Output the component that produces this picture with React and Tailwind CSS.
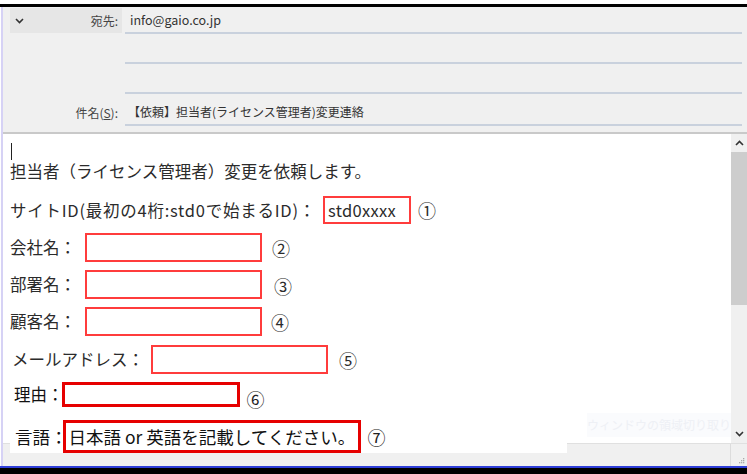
import React from "react";

const jp = { fontFamily: '"Noto Sans CJK JP", "Noto Sans", sans-serif' };

function Chevron({ up = false, className = "" }) {
  return (
    <svg width="9" height="6" viewBox="0 0 9 6" className={className}>
      <path
        d={up ? "M1 5 L4.5 1.5 L8 5" : "M1 1 L4.5 4.5 L8 1"}
        fill="none"
        stroke="#333"
        strokeWidth="1.6"
      />
    </svg>
  );
}

function Box({ w, h, thick = false, children, className = "" }) {
  return (
    <div
      className={`flex items-center shrink-0 ${
        thick ? "border-[3px] border-[#e60000]" : "border-2 border-[#ff3c3c]"
      } ${w} ${h} ${className}`}
    >
      {children}
    </div>
  );
}

export default function App() {
  return (
    <div
      className="w-[747px] h-[474px] bg-white flex flex-col overflow-hidden text-[#333]"
      style={jp}
    >
      <div className="h-[4px] bg-white shrink-0" />
      <div className="h-[3px] bg-black shrink-0" />
      <div className="flex-1 flex flex-col ml-[1px] border-l-2 border-[#d6d2f5] min-h-0">
        {/* header */}
        <div className="h-[125px] bg-[#f0f0f0] flex flex-col shrink-0">
          <div className="h-[27px] flex items-start pt-[1px]">
            <div className="ml-[7px] w-[112px] h-[25px] bg-[#e6e6e6] flex items-center justify-between pl-[5px] pr-[4px]">
              <Chevron />
              <span className="text-[12px] text-[#444]">宛先:</span>
            </div>
            <div className="ml-[3px] mr-[5px] flex-1 h-[26px] border-b-2 border-[#c9d1dd] flex items-center pl-[5px] text-[12.5px] text-[#333]">
              info@gaio.co.jp
            </div>
          </div>
          <div className="h-[30px] flex">
            <div className="w-[122px]" />
            <div className="mr-[5px] flex-1 border-b-2 border-[#c9d1dd]" />
          </div>
          <div className="h-[30px] flex">
            <div className="w-[122px]" />
            <div className="mr-[5px] flex-1 border-b-2 border-[#c9d1dd]" />
          </div>
          <div className="h-[32px] flex">
            <div className="w-[119px] flex items-center justify-end pr-[4px] pt-[6px] text-[12px] text-[#444]">
              件名(<span className="underline">S</span>):
            </div>
            <div className="ml-[3px] mr-[5px] flex-1 border-b-2 border-[#c9d1dd] flex items-center pl-[3px] pt-[6px] text-[12px] text-[#333]">
              【依頼】担当者(ライセンス管理者)変更連絡
            </div>
          </div>
        </div>
        <div className="h-[2px] bg-[#c9c9c9] shrink-0" />

        {/* body */}
        <div className="h-[309px] flex shrink-0 relative">
          <div className="flex-1 relative pl-[7px]">
            <div className="absolute right-0 top-[279px] w-[144px] h-[24px] bg-[#fafbfd] overflow-hidden flex items-center text-[12px] text-[#eef0f5] whitespace-nowrap">
              ウィンドウの領域切り取り
            </div>
            <div className="relative z-10 w-[557px] bg-white flex flex-col text-[16.5px] text-[#2b2b2b] leading-none">
              <div className="h-[26px] pt-[9px] pl-[1px]">
                <div className="w-[1px] h-[17px] bg-[#222]" />
              </div>
              <div className="h-[22px] flex items-center whitespace-nowrap">
                担当者（ライセンス管理者）変更を依頼します。
              </div>
              <div className="h-[28px] mt-[14px] flex items-center whitespace-nowrap">
                <span className="tracking-[0.75px]">サイトID(最初の4桁:std0で始まるID)：</span>
                <Box w="w-[88px]" h="h-[28px]" className="ml-[7px] pl-[3px] tracking-[0.3px]">
                  std0xxxx
                </Box>
                <span className="ml-[7px] text-[18px]">①</span>
              </div>
              <div className="h-[29px] mt-[9px] flex items-center">
                <span>会社名：</span>
                <Box w="w-[177px]" h="h-[29px]" className="ml-[9px]" />
                <span className="ml-[10px] text-[18px]">②</span>
              </div>
              <div className="h-[29px] mt-[8px] flex items-center">
                <span>部署名：</span>
                <Box w="w-[177px]" h="h-[29px]" className="ml-[9px]" />
                <span className="ml-[12px] mt-[2px] text-[18px]">③</span>
              </div>
              <div className="h-[29px] mt-[8px] flex items-center">
                <span>顧客名：</span>
                <Box w="w-[177px]" h="h-[29px]" className="ml-[9px]" />
                <span className="ml-[9px] text-[18px]">④</span>
              </div>
              <div className="h-[29px] mt-[9px] flex items-center pl-[2px]">
                <span>メールアドレス：</span>
                <Box w="w-[177px]" h="h-[29px]" className="ml-[7px]" />
                <span className="ml-[11px] text-[18px]">⑤</span>
              </div>
              <div className="h-[25px] mt-[8px] flex items-center pl-[4px] text-[#111]">
                <span>理由：</span>
                <Box w="w-[178px]" h="h-[25px]" thick className="-ml-[2px]" />
                <span className="ml-[7px] mt-[8px] text-[18px] text-[#222]">⑥</span>
              </div>
              <div className="h-[33px] mt-[13px] flex items-center pl-[5px] text-[17.5px] text-[#111]">
                <span>言語：</span>
                <Box w="w-[298px]" h="h-[33px]" thick className="-ml-[5px] pl-[3px] whitespace-nowrap">
                  日本語 or 英語を記載してください。
                </Box>
                <span className="ml-[7px] text-[18px] text-[#222]">⑦</span>
              </div>
            </div>
          </div>
          {/* scrollbar */}
          <div className="w-[16px] bg-[#f0f0f0] flex flex-col shrink-0">
            <div className="h-[18px] flex items-center justify-center">
              <Chevron up />
            </div>
            <div className="h-[153px] bg-[#cdcdcd]" />
            <div className="flex-1" />
            <div className="h-[19px] flex items-center justify-center">
              <Chevron />
            </div>
          </div>
        </div>

        {/* bottom strip */}
        <div className="h-[23px] bg-[#f0f0f0] border-t border-[#e0e0e0] flex shrink-0">
          <div className="flex-1" />
          <div className="w-[17px] border-l border-[#dcdcdc] flex items-end justify-end pb-[2px] pr-[2px]">
            <svg width="6" height="6" viewBox="0 0 6 6">
              <rect x="4" y="0" width="1.3" height="1.3" fill="#aaa" />
              <rect x="2" y="2" width="1.3" height="1.3" fill="#aaa" />
              <rect x="4" y="2" width="1.3" height="1.3" fill="#aaa" />
              <rect x="0" y="4" width="1.3" height="1.3" fill="#aaa" />
              <rect x="2" y="4" width="1.3" height="1.3" fill="#aaa" />
              <rect x="4" y="4" width="1.3" height="1.3" fill="#aaa" />
            </svg>
          </div>
        </div>
      </div>
      <div className="h-[2px] bg-[#2f3ed8] shrink-0" />
      <div className="h-[6px] bg-black shrink-0" />
    </div>
  );
}
